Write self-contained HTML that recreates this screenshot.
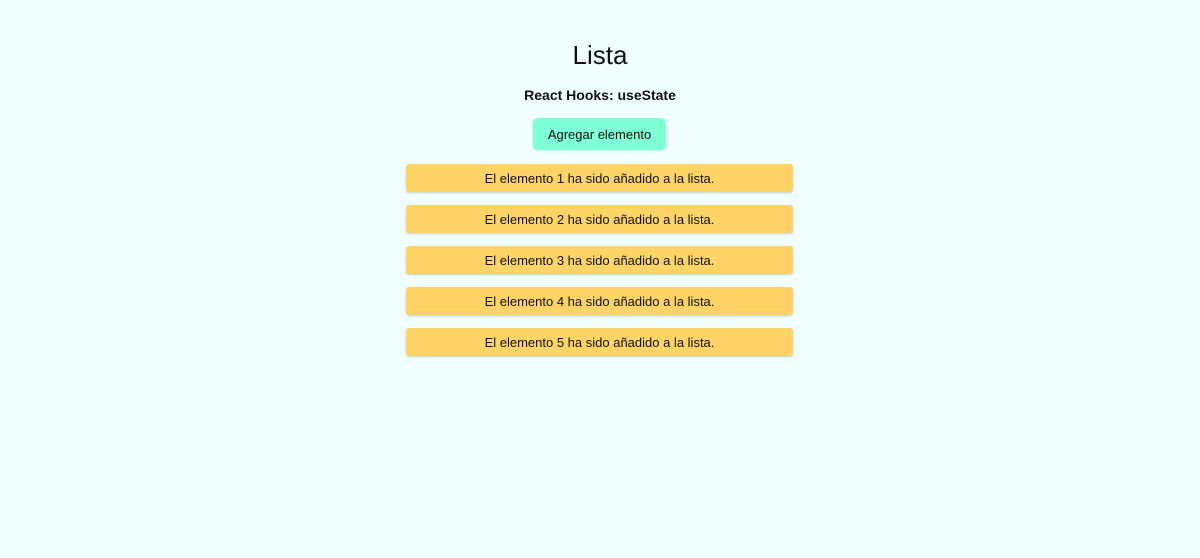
<!DOCTYPE html>
<html><head><style>
body{margin:0;background:#f0ffff;font-family:"Liberation Sans",sans-serif;color:#111;width:1200px;height:558px;overflow:hidden}
h1{position:absolute;top:38px;left:0;width:1200px;text-align:center;margin:0;font-size:26px;font-weight:500;line-height:34px}
h2{position:absolute;top:86px;left:0;width:1200px;text-align:center;margin:0;font-size:14px;font-weight:600;line-height:18px}
.btn{position:absolute;left:533px;top:118px;width:133px;height:32px;background:#7fffd4;border-radius:5px;font-size:13px;line-height:33px;text-align:center;box-shadow:0 1px 2px rgba(0,0,0,.12)}
.it{position:absolute;left:406px;width:387px;height:28px;background:#ffd466;border-radius:3px;font-size:13px;line-height:29px;text-align:center;box-shadow:0 1px 2px rgba(0,0,0,.2)}
</style></head><body>
<h1>Lista</h1>
<h2>React Hooks: useState</h2>
<div class="btn">Agregar elemento</div>
<div class="it" style="top:164px">El elemento 1 ha sido añadido a la lista.</div>
<div class="it" style="top:205px">El elemento 2 ha sido añadido a la lista.</div>
<div class="it" style="top:246px">El elemento 3 ha sido añadido a la lista.</div>
<div class="it" style="top:287px">El elemento 4 ha sido añadido a la lista.</div>
<div class="it" style="top:328px">El elemento 5 ha sido añadido a la lista.</div>
</body></html>
